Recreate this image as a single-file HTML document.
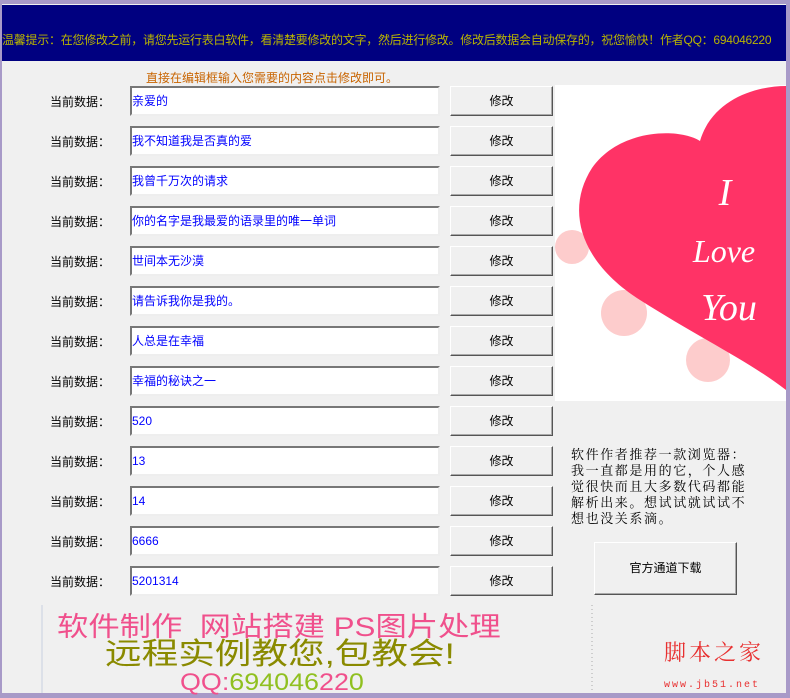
<!DOCTYPE html>
<html><head><meta charset="utf-8"><style>
body{margin:0;width:790px;height:698px;background:#a89ac8;position:relative;overflow:hidden;font-family:"Liberation Sans","Noto Sans CJK SC",sans-serif}
.win{position:absolute;left:2px;top:4px;width:784px;height:689px;background:#f0f0f0}
.band{position:absolute;left:2px;top:5px;width:784px;height:56px;background:#000080;overflow:hidden}
.tip{position:absolute;left:0;top:26px;font-size:12px;color:#b8b400;white-space:nowrap;font-family:"WenQuanYi Zen Hei",sans-serif;letter-spacing:-0.25px}
.lbl{position:absolute;left:50px;font-size:12px;color:#000}
.inp{position:absolute;left:130px;width:306px;height:26px;background:#fff;border:2px solid;border-color:#777 #eee #eee #777;font-size:12px;color:#0000ff;line-height:26px;padding-left:0}
.btn{position:absolute;left:450px;width:101px;height:28px;background:#f0f0f0;border:1px solid;border-color:#fff #555 #555 #fff;box-shadow:inset -1px -1px #aaa;font-size:12px;text-align:center;line-height:28px}
.bt{position:absolute;white-space:nowrap;transform-origin:0 50%}
</style></head><body>
<div class="win"></div>
<div class="band"><div class="tip">温馨提示：在您修改之前，请您先运行表白软件，看清楚要修改的文字，然后进行修改。修改后数据会自动保存的，祝您愉快！作者QQ：694046220</div></div>
<div style="position:absolute;left:146px;top:69px;font-size:12px;color:#c86400">直接在编辑框输入您需要的内容点击修改即可。</div>
<div id="rows"></div>
<script>
var t=["亲爱的","我不知道我是否真的爱","我曾千万次的请求","你的名字是我最爱的语录里的唯一单词","世间本无沙漠","请告诉我你是我的。","人总是在幸福","幸福的秘诀之一","520","13","14","6666","5201314"];
var h="";for(var i=0;i<13;i++){var y=86+i*40;h+='<div class="lbl" style="top:'+(y+7)+'px">当前数据：</div><div class="inp" style="top:'+y+'px">'+t[i]+'</div><div class="btn" style="top:'+y+'px">修改</div>';}
document.getElementById("rows").innerHTML=h;
</script>
<svg style="position:absolute;left:0;top:0" width="790" height="698">
<rect x="555" y="85" width="231" height="316" fill="#fff"/>
<circle cx="572" cy="247" r="17" fill="#fdcccc"/><circle cx="624" cy="313" r="23" fill="#fdcccc"/><circle cx="708" cy="360" r="22" fill="#fdcccc"/>
<path d="M700,141 C680,128 620,128 592,168 C565,210 580,262 640,300 C700,338 750,362 786,390 L786,86 C755,86 712,100 700,141 Z" fill="#ff3366"/>
<g fill="#fff" font-family="Liberation Serif,serif" font-style="italic" text-anchor="middle">
<text x="725" y="205" font-size="38">I</text><text x="724" y="262" font-size="32">Love</text><text x="729" y="320" font-size="38">You</text></g>
<line x1="42" y1="605" x2="42" y2="693" stroke="#c8d0e0"/>
<line x1="592" y1="605" x2="592" y2="693" stroke="#aaa" stroke-dasharray="1,3"/>
</svg>
<div style="position:absolute;left:571px;top:446px;width:205px;font-size:13px;line-height:16px;font-family:'Noto Serif CJK SC',serif;letter-spacing:1.6px;white-space:nowrap">软件作者推荐一款浏览器：<br>我一直都是用的它，个人感<br>觉很快而且大多数代码都能<br>解析出来。想试试就试试不<br>想也没关系滴。</div>
<div class="btn" style="left:594px;top:542px;width:141px;height:51px;line-height:51px">官方通道下载</div>
<div class="bt" style="left:57px;top:614px;font-size:27px;line-height:27px;color:#f0508c;transform:scaleX(1.16)">软件制作&nbsp; 网站搭建 PS图片处理</div>
<div class="bt" style="left:105px;top:640px;font-size:30px;line-height:30px;color:#8a8a00;transform:scaleX(1.22)">远程实例教您,包教会!</div>
<div class="bt" style="left:180px;top:671px;font-size:24px;line-height:24px;transform:scaleX(1.12)"><span style="color:#f0508c">QQ:</span><span style="color:#90c020">694046</span><span style="color:#f0508c">22</span><span style="color:#90c020">0</span></div>
<div style="position:absolute;left:664px;top:636px;font-size:22px;color:#e83030;font-family:'Noto Serif CJK SC',serif;letter-spacing:3px">脚本之家</div>
<div style="position:absolute;left:664px;top:680px;font-size:10px;color:#e83030;letter-spacing:2px;font-family:'Liberation Mono',monospace">www.jb51.net</div>
</body></html>
